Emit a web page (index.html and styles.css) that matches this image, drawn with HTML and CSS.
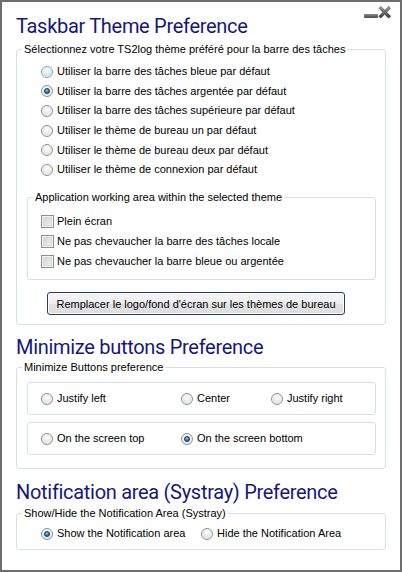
FILE: index.html
```html
<!DOCTYPE html>
<html lang="fr">
<head>
<meta charset="utf-8">
<title>Taskbar Theme Preference</title>
<link rel="stylesheet" href="styles.css">
</head>
<body>
<div class="window">
  <div class="controls">
    <svg width="30" height="14" viewBox="0 0 30 14">
      <defs>
        <linearGradient id="g" x1="0" y1="0" x2="0" y2="1">
          <stop offset="0" stop-color="#8a8a8a"/>
          <stop offset="1" stop-color="#4a4a4a"/>
        </linearGradient>
      </defs>
      <rect x="3" y="8" width="14" height="4" rx="1" fill="url(#g)"/>
      <path d="M19.8 2.3 L27.7 10.2 M27.7 2.3 L19.8 10.2" stroke="url(#g)" stroke-width="3.4" stroke-linecap="square"/>
    </svg>
  </div>

  <h1 class="heading h-first">Taskbar Theme Preference</h1>
  <fieldset class="group g1">
    <legend>Sélectionnez votre TS2log thème préféré pour la barre des tâches</legend>
    <div class="body body-g1">
      <div class="opt-list">
        <label class="opt"><span class="radio hover"></span>Utiliser la barre des tâches bleue par défaut</label>
        <label class="opt"><span class="radio on"></span>Utiliser la barre des tâches argentée par défaut</label>
        <label class="opt"><span class="radio"></span>Utiliser la barre des tâches supérieure par défaut</label>
        <label class="opt"><span class="radio"></span>Utiliser le thème de bureau un par défaut</label>
        <label class="opt"><span class="radio"></span>Utiliser le thème de bureau deux par défaut</label>
        <label class="opt"><span class="radio"></span>Utiliser le thème de connexion par défaut</label>
      </div>
      <fieldset class="group inner">
        <legend>Application working area within the selected theme</legend>
        <div class="check-list">
          <label class="chk"><span class="checkbox"></span>Plein écran</label>
          <label class="chk"><span class="checkbox"></span>Ne pas chevaucher la barre des tâches locale</label>
          <label class="chk"><span class="checkbox"></span>Ne pas chevaucher la barre bleue ou argentée</label>
        </div>
      </fieldset>
      <button class="btn" type="button">Remplacer le logo/fond d'écran sur les thèmes de bureau</button>
    </div>
  </fieldset>

  <h1 class="heading h-second">Minimize buttons Preference</h1>
  <fieldset class="group g2">
    <legend>Minimize Buttons preference</legend>
    <div class="body body-g2">
      <div class="box cols-min">
        <label class="opt"><span class="radio"></span>Justify left</label>
        <label class="opt"><span class="radio"></span>Center</label>
        <label class="opt"><span class="radio"></span>Justify right</label>
      </div>
      <div class="box cols-min">
        <label class="opt"><span class="radio"></span>On the screen top</label>
        <label class="opt"><span class="radio on"></span>On the screen bottom</label>
      </div>
    </div>
  </fieldset>

  <h1 class="heading h-third">Notification area (Systray) Preference</h1>
  <fieldset class="group g3">
    <legend>Show/Hide the Notification Area (Systray)</legend>
    <div class="body body-g3">
      <div class="cols-sys">
        <label class="opt"><span class="radio on"></span>Show the Notification area</label>
        <label class="opt"><span class="radio"></span>Hide the Notification Area</label>
      </div>
    </div>
  </fieldset>
</div>
</body>
</html>
```
FILE: styles.css
```css
html, body {
  margin: 0;
  padding: 0;
  background: #ffffff;
}

.window {
  position: relative;
  width: 402px;
  height: 572px;
  box-sizing: border-box;
  border: 2px solid #6e6e6e;
  background: #ffffff;
  padding: 12px 14px 0 14px;
  font-family: "Liberation Sans", Arial, sans-serif;
  font-size: 11px;
  color: #000;
  display: flex;
  flex-direction: column;
}

.controls {
  position: absolute;
  top: 4px;
  left: 359px;
  line-height: 0;
}

.heading {
  margin: 0;
  font-family: Roboto, "Noto Sans", sans-serif;
  font-weight: normal;
  font-size: 20px;
  letter-spacing: -0.3px;
  line-height: 24px;
  height: 24px;
  color: #16167e;
  white-space: nowrap;
}

.h-second { margin-top: 9.5px; }
.h-third { margin-top: 10.5px; }

.group {
  margin: 0;
  padding: 0;
  min-width: 0;
  border: 1px solid #d5dfe5;
  border-radius: 3px;
}

.group > legend {
  margin-left: 5px;
  padding: 0 2px;
  font-size: 11px;
  line-height: 13px;
  white-space: nowrap;
}

.g1 { margin-top: 5px; }
.g2 { margin-top: 2.5px; }
.g3 { margin-top: 3px; }

.body-g1 { padding: 6px 9px 9px 10px; display: flex; flex-direction: column; align-items: flex-start; }
.body-g2 { padding: 8px 9px 13px 10px; display: flex; flex-direction: column; gap: 7px; }
.body-g3 { padding: 4px 9px 5.5px 10px; }

.opt-list {
  padding-left: 14px;
  display: flex;
  flex-direction: column;
}

.opt-list .opt { height: 19.6px; }

.opt, .chk {
  display: flex;
  align-items: center;
  white-space: nowrap;
  line-height: 13px;
}

.radio {
  flex: none;
  width: 12px;
  height: 12px;
  box-sizing: border-box;
  border-radius: 50%;
  border: 1px solid #8d9196;
  background: radial-gradient(circle at 50% 35%, #ffffff 0%, #f0f0f0 35%, #cfcfcf 100%);
  box-shadow: inset 0 0 0 1px #f6f6f6;
  margin-right: 4px;
  position: relative;
}

.radio.hover {
  border-color: #7fa6c8;
  background: radial-gradient(circle at 50% 35%, #ffffff 0%, #e3f0fa 35%, #b6d2e8 100%);
}

.radio.on::after {
  content: "";
  position: absolute;
  left: 2px;
  top: 2px;
  width: 6px;
  height: 6px;
  border-radius: 50%;
  box-sizing: border-box;
  background: radial-gradient(circle at 45% 35%, #8fdcff 0%, #2a8ac8 45%, #0d3e66 100%);
  border: 1px solid #193a57;
}

.inner {
  margin-top: 11.5px;
  width: 349px;
  box-sizing: border-box;
}

.check-list {
  padding: 7.5px 0 7.5px 13px;
  display: flex;
  flex-direction: column;
}

.chk { height: 20px; }

.checkbox {
  flex: none;
  width: 13px;
  height: 13px;
  box-sizing: border-box;
  border: 1px solid #8e8f8f;
  background: linear-gradient(135deg, #cdcdcd 0%, #e6e6e6 60%, #f4f4f4 100%);
  box-shadow: inset 0 0 0 1px #f4f4f4, inset 0 0 0 2px #d9d9d9;
  margin-right: 3px;
}

.btn {
  margin: 12px 0 0 20px;
  width: 298px;
  height: 23px;
  box-sizing: border-box;
  padding: 0;
  border: 1px solid #253f61;
  border-radius: 3px;
  background: linear-gradient(#f5f5f5 0%, #eeeeee 50%, #e3e3e3 51%, #dddddd 100%);
  box-shadow: inset 0 0 0 1px #fbfbfb;
  font-family: "Liberation Sans", Arial, sans-serif;
  font-size: 11px;
  color: #000;
  text-align: center;
}

.box {
  height: 33px;
  box-sizing: border-box;
  border: 1px solid #d5dfe5;
  border-radius: 3px;
  padding-left: 13px;
  align-items: center;
}

.cols-min {
  display: grid;
  grid-template-columns: 140px 90px auto;
}

.cols-sys {
  display: grid;
  grid-template-columns: 160px auto;
  padding-left: 14px;
  height: 20px;
  align-items: center;
}
```
